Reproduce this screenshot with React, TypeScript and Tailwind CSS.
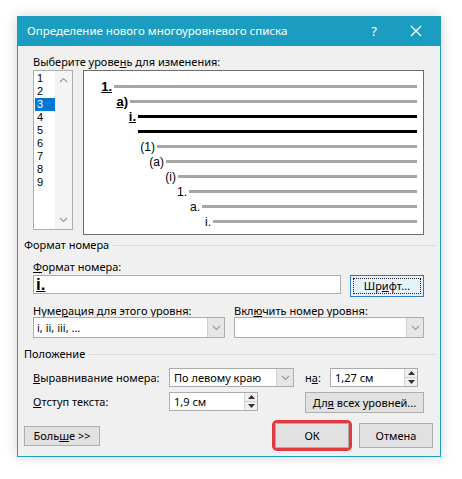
import type { ReactNode } from 'react'

const levels = [
  { label: '1.', pad: 'w-[30px]', bold: true, dark: false },
  { label: 'a)', pad: 'w-[46px]', bold: true, dark: false },
  { label: 'i.', pad: 'w-[54px]', bold: true, dark: true },
  { label: '', pad: 'w-[54px]', bold: false, dark: true },
  { label: '(1)', pad: 'w-[73px]', bold: false, dark: false },
  { label: '(a)', pad: 'w-[82px]', bold: false, dark: false },
  { label: '(i)', pad: 'w-[94px]', bold: false, dark: false },
  { label: '1.', pad: 'w-[105px]', bold: false, dark: false },
  { label: 'a.', pad: 'w-[118px]', bold: false, dark: false },
  { label: 'i.', pad: 'w-[129px]', bold: false, dark: false },
]

function Chevron({ up = false }: { up?: boolean }) {
  return (
    <svg width="9" height="6" viewBox="0 0 9 6" className={up ? 'rotate-180' : ''}>
      <path d="M1 1 L4.5 4.5 L8 1" fill="none" stroke="#9a9a9a" strokeWidth="1.2" />
    </svg>
  )
}

function DropBtn() {
  return (
    <div className="w-[17px] h-full flex items-center justify-center bg-[#e6e6e6] border-l border-[#d0d0d0]">
      <Chevron />
    </div>
  )
}

function Spin() {
  return (
    <div className="w-[13px] h-full flex flex-col border-l border-[#d0d0d0] bg-[#f0f0f0]">
      <div className="flex-1 flex items-center justify-center border-b border-[#d0d0d0]">
        <svg width="7" height="4" viewBox="0 0 7 4"><path d="M0 4 L3.5 0 L7 4 Z" fill="#333" /></svg>
      </div>
      <div className="flex-1 flex items-center justify-center">
        <svg width="7" height="4" viewBox="0 0 7 4"><path d="M0 0 L3.5 4 L7 0 Z" fill="#333" /></svg>
      </div>
    </div>
  )
}

function GroupHeader({ children }: { children: ReactNode }) {
  return (
    <div className="flex items-center h-[16px] pl-[6px] pr-[3px]">
      <span className="whitespace-nowrap">{children}</span>
      <div className="flex-1 h-px bg-[#dcdcdc] ml-[4px]" />
    </div>
  )
}

function Button({ children, className = '' }: { children: ReactNode; className?: string }) {
  return (
    <div className={`flex items-center justify-center whitespace-nowrap bg-[#e1e1e1] border border-[#adadad] ${className}`}>
      {children}
    </div>
  )
}

export default function App() {
  return (
    <div className="w-[462px] h-[479px] bg-white pt-[16px] pl-[17px] font-['Noto_Sans',sans-serif] text-[11px] text-black leading-[16px]">
      <div className="w-[424px] h-[441px] flex flex-col shadow-[0_0_12px_rgba(0,0,0,0.18)]">
        {/* title bar */}
        <div className="h-[30px] bg-[#1b9dc1] flex items-center pl-[10px] text-white text-[11.5px]">
          <span className="flex-1">Определение нового многоуровневого списка</span>
          <span className="w-[12px] text-center mr-[30px] text-[13px]">?</span>
          <svg width="12" height="12" viewBox="0 0 12 12" className="mr-[19px]">
            <path d="M1 1 L11 11 M11 1 L1 11" stroke="white" strokeWidth="1.3" />
          </svg>
        </div>

        {/* body */}
        <div className="flex-1 bg-[#f0f0f0] border-x border-b border-[#1b9dc1] flex flex-col">
          <div className="pl-[15px] mt-[8px]">
            Выберите урове<u>н</u>ь для изменения:
          </div>

          <div className="flex items-start pl-[15px] gap-[10px]">
            {/* level list */}
            <div className="w-[40px] h-[160px] bg-white border border-[#acacac] flex">
              <div className="flex-1 pt-[1px] pl-[1px] font-['Liberation_Sans',sans-serif]">
                {['1', '2', '3', '4', '5', '6', '7', '8', '9'].map((n) => (
                  <div
                    key={n}
                    className={`h-[13px] leading-[13px] text-[11px] pl-[2px] ${n === '3' ? 'bg-[#0078d7] text-white' : ''}`}
                  >
                    {n}
                  </div>
                ))}
              </div>
              <div className="w-[17px] bg-[#f4f4f4] flex flex-col items-center justify-between py-[6px]">
                <Chevron up />
                <Chevron />
              </div>
            </div>

            {/* preview */}
            <div className="w-[341px] h-[165px] bg-white border border-[#6d6d6d] pt-[8px] pr-[6px] font-['Liberation_Sans',sans-serif]">
              {levels.map((l, i) => (
                <div key={i} className="flex items-center h-[15px]">
                  <div
                    className={`${l.pad} shrink-0 text-right pr-[2px] whitespace-nowrap ${
                      l.bold ? 'font-bold underline text-[13px]' : 'text-[12px]'
                    }`}
                  >
                    {l.label}
                  </div>
                  <div className={`flex-1 h-[3px] ${l.dark ? 'bg-black' : 'bg-[#a6a6a6]'}`} />
                </div>
              ))}
            </div>
          </div>

          <div className="mt-[2px]">
            <GroupHeader>Формат номера</GroupHeader>
          </div>

          <div className="pl-[15px] mt-[6px]">
            <u>Ф</u>ормат номера:
          </div>
          <div className="flex items-start pl-[15px]">
            <div className="w-[308px] h-[19px] bg-white border border-[#acacac] flex items-center pl-[2px] font-['Liberation_Sans',sans-serif] font-bold underline text-[17px]">
              i.
            </div>
            <div className="ml-[9px] w-[74px] h-[22px] border border-[#2f79c0] bg-[#e5f1fb] p-[2px]">
              <div className="w-full h-full border border-dotted border-[#222] flex items-center justify-center">
                Шр<u>и</u>фт...
              </div>
            </div>
          </div>

          <div className="flex pl-[15px] mt-[6px]">
            <div className="w-[201px]">
              Нуме<u>р</u>ация для этого уровня:
            </div>
            <div>
              Вкл<u>ю</u>чить номер уровня:
            </div>
          </div>
          <div className="flex pl-[15px] mt-[-2px]">
            <div className="w-[192px] h-[21px] bg-white border border-[#acacac] flex">
              <div className="flex-1 pl-[3px] flex items-center">i, ii, iii, ...</div>
              <DropBtn />
            </div>
            <div className="ml-[9px] w-[190px] h-[21px] bg-white border border-[#acacac] flex">
              <div className="flex-1" />
              <DropBtn />
            </div>
          </div>

          <div className="mt-[8px]">
            <GroupHeader>Положение</GroupHeader>
          </div>

          <div className="flex items-center pl-[15px] mt-[6px] h-[19px]">
            <div className="w-[136px] whitespace-nowrap">
              <u>В</u>ыравнивание номера:
            </div>
            <div className="w-[125px] h-[19px] bg-white border border-[#acacac] flex">
              <div className="flex-1 pl-[4px] flex items-center whitespace-nowrap">По левому краю</div>
              <DropBtn />
            </div>
            <div className="ml-[11px] w-[25px]">
              н<u>а</u>:
            </div>
            <div className="w-[88px] h-[19px] bg-white border border-[#acacac] flex">
              <div className="flex-1 pl-[4px] flex items-center">1,27 см</div>
              <Spin />
            </div>
          </div>

          <div className="flex items-start pl-[15px] mt-[5px]">
            <div className="w-[136px] h-[19px] flex items-center">
              <u>О</u>тступ текста:
            </div>
            <div className="w-[89px] h-[19px] bg-white border border-[#acacac] flex">
              <div className="flex-1 pl-[4px] flex items-center">1,9 см</div>
              <Spin />
            </div>
            <Button className="ml-[47px] w-[119px] h-[21px]">
              Дл<u>я</u>&nbsp;всех уровней...
            </Button>
          </div>

          <div className="flex items-center mt-[7px] pl-[6px] pr-[7px]">
            <Button className="w-[76px] h-[20px]">
              Боль<u>ш</u>е &gt;&gt;
            </Button>
            <div className="ml-auto border-[3px] border-[#e03a3e] rounded-[5px]">
              <Button className="w-[74px] h-[25px]">ОК</Button>
            </div>
            <Button className="ml-[7px] w-[74px] h-[25px]">Отмена</Button>
          </div>
        </div>
      </div>
    </div>
  )
}
